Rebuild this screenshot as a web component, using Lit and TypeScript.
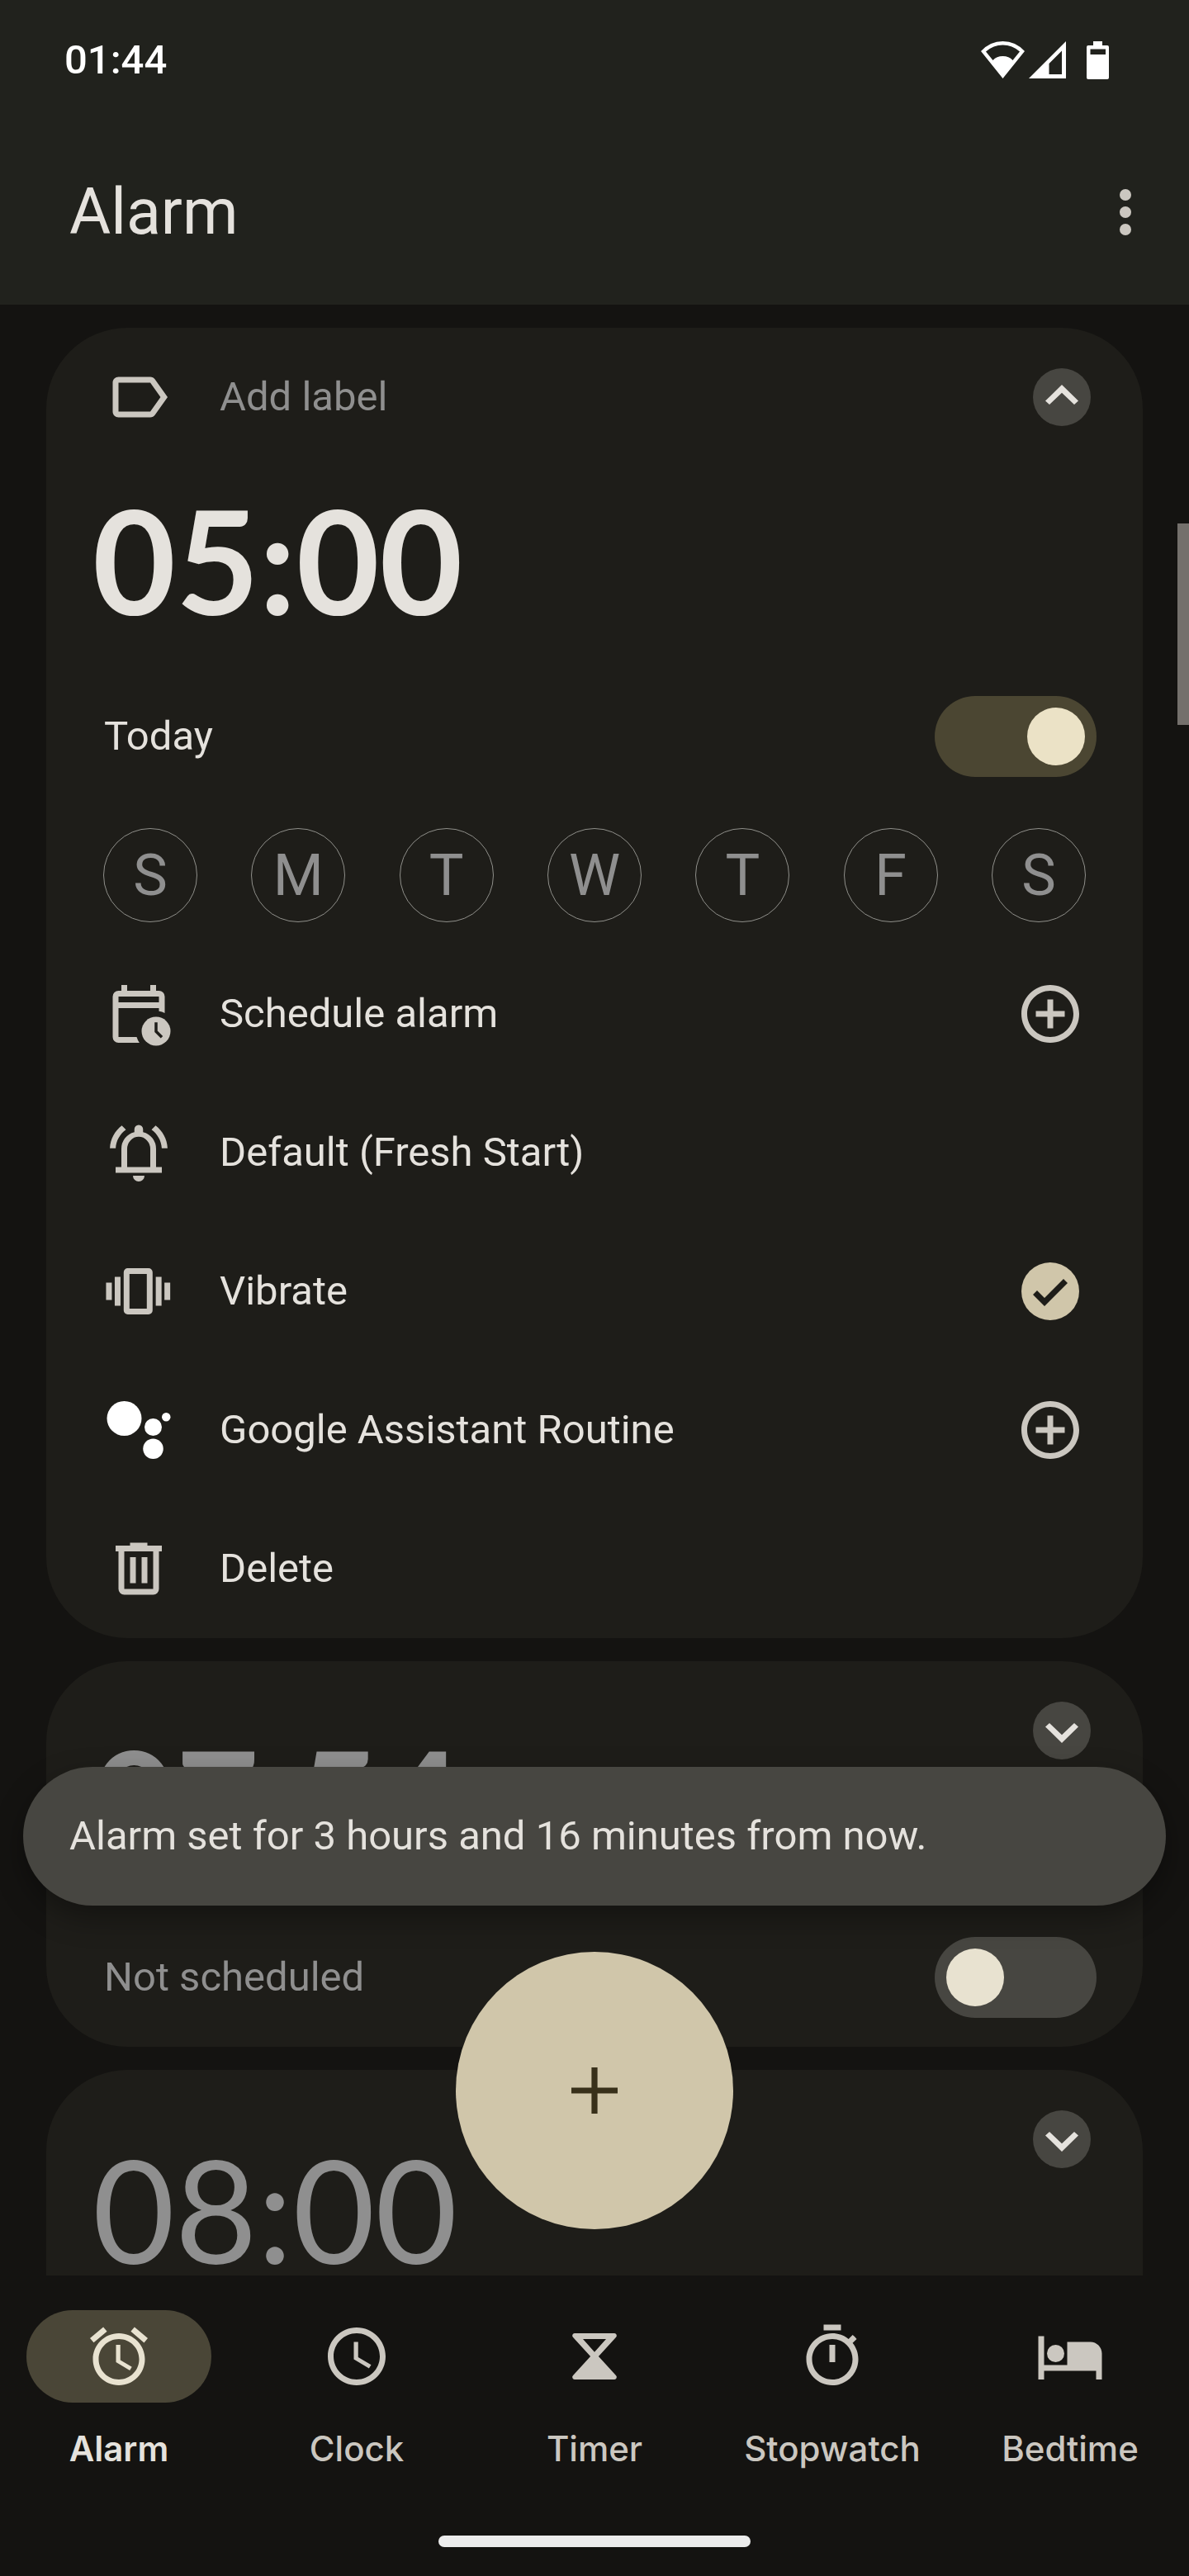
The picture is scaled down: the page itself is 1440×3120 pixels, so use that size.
import { LitElement, html, css, svg, nothing } from "lit";
import { customElement, property } from "lit/decorators.js";
import { classMap } from "lit/directives/class-map.js";

const glyphs = {
  label: svg`<path d="M17.63 5.84C17.27 5.33 16.67 5 16 5L5 5.01C3.9 5.01 3 5.9 3 7v10c0 1.1.9 1.99 2 1.99L16 19c.67 0 1.27-.33 1.63-.84L22 12l-4.37-6.16zM16 17H5V7h11l3.55 5L16 17z"/>`,
  more: svg`<circle cx="12" cy="6" r="2"/><circle cx="12" cy="12" r="2"/><circle cx="12" cy="18" r="2"/>`,
  calendar: svg`<path fill-rule="evenodd" d="M21 11.68V6a2 2 0 0 0-2-2H5a2 2 0 0 0-2 2v14a2 2 0 0 0 2 2h7.26a7 7 0 0 1-.97-2H5V10h14v1.07a7 7 0 0 1 2 .61zM5 6h14v2H5z"/><path d="M6 2h2v2.5H6zM16 2h2v2.5h-2z"/><circle cx="18" cy="18" r="5"/><path d="M18 14.9V18.1L20 20.1" fill="none" stroke="#1e1d19" stroke-width="1"/>`,
  bell: svg`<path d="M7.58 4.08L6.15 2.65C3.75 4.48 2.17 7.3 2.03 10.5h2c.15-2.65 1.51-4.97 3.55-6.42zm12.39 6.42h2c-.15-3.2-1.73-6.02-4.12-7.85l-1.42 1.43c2.02 1.45 3.39 3.77 3.54 6.42z"/><path fill-rule="evenodd" d="M4 19v-2h2v-6.3q0-2.075 1.25-3.688Q8.5 5.4 10.5 4.9V3.9q0-.625.438-1.063Q11.375 2.4 12 2.4t1.063.437Q13.5 3.275 13.5 3.9v1q2 .5 3.25 2.112Q18 8.625 18 10.7V17h2v2ZM8 17h8v-6.3q0-1.65-1.175-2.925Q13.65 6.5 12 6.5q-1.65 0-2.825 1.275Q8 9.05 8 10.7ZM12 22q-.825 0-1.412-.587Q10 20.825 10 20h4q0 .825-.587 1.413Q12.825 22 12 22Z"/>`,
  vibrate: svg`<path d="M.7 9h2v6h-2zM3.7 7h2v10h-2zM17.9 7h2v10h-2zM20.9 9h2v6h-2z"/><rect x="7.8" y="5" width="8" height="14" rx=".4" fill="none" stroke="currentColor" stroke-width="2" stroke-linejoin="round"/>`,
  assistant: svg`<g fill="#fff"><circle cx="7" cy="8" r="6"/><circle cx="17" cy="11" r="3"/><circle cx="21.5" cy="7.5" r="1.5"/><circle cx="17" cy="18.5" r="3.5"/></g>`,
  trash: svg`<path fill-rule="evenodd" d="M9 3h6v1h5v2h-1v13a2 2 0 0 1-2 2H7a2 2 0 0 1-2-2V6H4V4h5zM7 6v13h10V6zM9 8h2v9H9zM13 8h2v9h-2z"/>`,
  addCircle: svg`<path d="M13 7h-2v4H7v2h4v4h2v-4h4v-2h-4V7zm-1-5C6.48 2 2 6.48 2 12s4.48 10 10 10 10-4.48 10-10S17.52 2 12 2zm0 18c-4.41 0-8-3.59-8-8s3.59-8 8-8 8 3.59 8 8-3.59 8-8 8z"/>`,
  plus: svg`<path d="M11.1 5h1.8v6.1H19v1.8h-6.1V19h-1.8v-6.1H5v-1.8h6.1z"/>`,
  alarm: svg`<path d="M22 5.72l-4.6-3.86-1.29 1.53 4.6 3.86L22 5.72zM7.88 3.39L6.6 1.86 2 5.71l1.29 1.53 4.59-3.85zM12.5 8H11v6l4.75 2.85.75-1.23-4-2.37V8zM12 4c-4.97 0-9 4.03-9 9s4.02 9 9 9c4.97 0 9-4.03 9-9s-4.03-9-9-9zm0 16c-3.87 0-7-3.13-7-7s3.13-7 7-7 7 3.13 7 7-3.13 7-7 7z"/>`,
  clock: svg`<path d="M11.99 2C6.47 2 2 6.48 2 12s4.47 10 9.99 10C17.52 22 22 17.52 22 12S17.52 2 11.99 2zM12 20c-4.42 0-8-3.58-8-8s3.58-8 8-8 8 3.58 8 8-3.58 8-8 8zM12.5 7H11v6l5.25 3.15.75-1.23-4.5-2.67z"/>`,
  timer: svg`<path fill-rule="evenodd" d="M5.2 4h13.6a.8.8 0 0 1 .6 1.4L13.4 12l6 6.6a.8.8 0 0 1-.6 1.4H5.2a.8.8 0 0 1-.6-1.4L10.6 12l-6-6.6A.8.8 0 0 1 5.2 4zM8 6l4 4.5L16 6z"/>`,
  stopwatch: svg`<path d="M15 1H9v2h6V1zm-4 13h2V8h-2v6zm8.03-6.61l1.42-1.42c-.43-.51-.9-.99-1.41-1.41l-1.42 1.42C16.07 4.74 14.12 4 12 4c-4.97 0-9 4.03-9 9s4.02 9 9 9 9-4.03 9-9c0-2.12-.74-4.07-1.97-5.61zM12 20c-3.87 0-7-3.13-7-7s3.13-7 7-7 7 3.13 7 7-3.13 7-7 7z"/>`,
  bed: svg`<circle cx="7" cy="11" r="3"/><path d="M19 7h-8v8H3V5H1v15h2v-3h18v3h2v-9c0-2.21-1.79-4-4-4z"/>`,
};
type Glyph = keyof typeof glyphs;

const icon = (name: Glyph) =>
  html`<svg class="icon" viewBox="0 0 24 24" fill="currentColor" aria-hidden="true">${glyphs[name]}</svg>`;

const shared = css`
  * {
    box-sizing: border-box;
  }
  button,
  input {
    margin: 0;
    padding: 0;
    border: 0;
    background: none;
    color: inherit;
    font: inherit;
    cursor: pointer;
  }
  .icon {
    display: block;
    flex: none;
    width: 84px;
    height: 84px;
  }
`;

const week: [string, string][] = [
  ["S", "Sunday"],
  ["M", "Monday"],
  ["T", "Tuesday"],
  ["W", "Wednesday"],
  ["T", "Thursday"],
  ["F", "Friday"],
  ["S", "Saturday"],
];

@customElement("alarm-card")
class AlarmCard extends LitElement {
  @property() time = "";
  @property() status = "";
  @property({ type: Boolean }) strong = false;
  @property({ type: Boolean }) active = false;
  @property({ type: Boolean }) expanded = false;

  static styles = [
    shared,
    css`
      :host {
        display: block;
        flex: none;
        border-radius: 98px;
        background: #1e1d19;
        color: #8f8f8f;
      }
      :host([active]) {
        color: #e5e2dd;
      }
      .row {
        display: flex;
        align-items: center;
        gap: 56px;
        width: 100%;
        height: 168px;
        padding: 0 70px;
        text-align: left;
      }
      .row .icon {
        color: #cbc7c0;
      }
      .label-row {
        padding-right: 63px;
      }
      .text {
        flex: 1;
      }
      .label-button {
        display: flex;
        flex: 1;
        align-items: center;
        gap: 56px;
        color: #8f8f8f;
      }
      .expander {
        flex: none;
        width: 70px;
        height: 70px;
        border-radius: 50%;
        background: #474641;
        color: #e5e2dd;
      }
      .expander svg {
        display: block;
        width: 100%;
      }
      .summary {
        display: flex;
        align-items: flex-start;
        justify-content: space-between;
        padding: 49px 63px 0 56px;
      }
      .summary .time {
        padding-top: 7px;
      }
      .main-time {
        padding: 0 56px;
      }
      .time {
        font: 400 172px/226px Lato, sans-serif;
      }
      .strong {
        font-size: 174px;
        font-weight: 700;
      }
      .toggle {
        display: flex;
        align-items: center;
        justify-content: space-between;
        padding: 52px 56px 35px 70px;
      }
      .switch {
        appearance: none;
        display: flex;
        flex: none;
        align-items: center;
        width: 196px;
        height: 98px;
        padding: 0 14px;
        border-radius: 49px;
        background: #474641;
      }
      .switch::before {
        content: "";
        width: 70px;
        height: 70px;
        border-radius: 50%;
        background: #e8e2d0;
      }
      .switch:checked {
        justify-content: flex-end;
        background: #4b4632;
      }
      .switch:checked::before {
        background: #ebe2c6;
      }
      .days {
        display: flex;
        justify-content: space-between;
        padding: 27px 69px;
      }
      .day {
        width: 114px;
        height: 114px;
        border: 1px solid #8f8f8a;
        border-radius: 50%;
        color: #8f8f8f;
        font-size: 70px;
        line-height: 112px;
      }
      .check {
        appearance: none;
        flex: none;
        width: 70px;
        height: 70px;
        margin: 0 7px;
        border: 7px solid #cbc7c0;
        border-radius: 50%;
      }
      .check:checked {
        border: 0;
        background: #d0c6aa;
      }
      .check:checked::before {
        content: "";
        display: block;
        width: 70px;
        height: 70px;
        background: #1e1d19;
        clip-path: polygon(28px 53px, 14px 39px, 19px 34px, 28px 43px, 51px 20px, 56px 25px);
      }
    `,
  ];

  private expander() {
    const points = this.expanded
      ? "35,20 55,39.6 50,44 35,29.7 20,44 15,39.6"
      : "35,50 55,30.4 50,26 35,40.3 20,26 15,30.4";
    return html`<button
      class="expander"
      aria-label=${this.expanded ? "Collapse alarm" : "Expand alarm"}
      aria-expanded=${this.expanded ? "true" : "false"}
    >
      <svg viewBox="0 0 70 70" fill="currentColor" aria-hidden="true"><polygon points=${points} /></svg>
    </button>`;
  }

  private clock() {
    return html`<button class=${classMap({ time: true, strong: this.strong })}>${this.time}</button>`;
  }

  private action(name: Glyph, text: string, trailing = false) {
    return html`<button class="row">
      ${icon(name)}<span class="text">${text}</span>${trailing ? icon("addCircle") : nothing}
    </button>`;
  }

  private details() {
    return html`
      <div class="days">
        ${week.map(([letter, name]) => html`<button class="day" aria-label=${name} aria-pressed="false">${letter}</button>`)}
      </div>
      ${this.action("calendar", "Schedule alarm", true)} ${this.action("bell", "Default (Fresh Start)")}
      <label class="row">
        ${icon("vibrate")}<span class="text">Vibrate</span><input class="check" type="checkbox" checked />
      </label>
      ${this.action("assistant", "Google Assistant Routine", true)} ${this.action("trash", "Delete")}
    `;
  }

  render() {
    return html`
      ${this.expanded
        ? html`<div class="row label-row">
              <button class="label-button">${icon("label")}<span>Add label</span></button>
              ${this.expander()}
            </div>
            <div class="main-time">${this.clock()}</div>`
        : html`<div class="summary">${this.clock()}${this.expander()}</div>`}
      <div class="toggle">
        <label for="enabled">${this.status}</label>
        <input
          id="enabled"
          class="switch"
          type="checkbox"
          role="switch"
          aria-label=${this.time}
          ?checked=${this.active}
        />
      </div>
      ${this.expanded ? this.details() : nothing}
    `;
  }
}

const tabs: [Glyph, string][] = [
  ["alarm", "Alarm"],
  ["clock", "Clock"],
  ["timer", "Timer"],
  ["stopwatch", "Stopwatch"],
  ["bed", "Bedtime"],
];

@customElement("app-root")
class AppRoot extends LitElement {
  static styles = [
    shared,
    css`
      :host {
        display: flex;
        flex-direction: column;
        height: 100vh;
        background: #141311;
        color: #e5e2dd;
        font: 400 49px/56px Roboto, sans-serif;
      }
      .header {
        flex: none;
        background: #21221d;
      }
      .status-bar {
        display: flex;
        align-items: center;
        justify-content: space-between;
        height: 145px;
        padding: 0 97px 0 78px;
        color: #fff;
        font-weight: 500;
      }
      .signals {
        display: flex;
        align-items: center;
        gap: 5px;
      }
      .signals svg {
        display: block;
        height: 46px;
      }
      .battery {
        margin-left: 20px;
      }
      .app-bar {
        display: flex;
        align-items: center;
        justify-content: space-between;
        height: 224px;
        padding: 0 35px 0 84px;
      }
      .title {
        margin: 0;
        font-size: 77px;
        font-weight: 400;
        line-height: 84px;
      }
      .more {
        color: #cbc7c0;
      }
      .stage {
        position: relative;
        flex: 1;
        min-height: 0;
      }
      .alarms {
        display: flex;
        flex-direction: column;
        gap: 28px;
        height: 100%;
        padding: 28px 56px 0;
        overflow-y: auto;
        scrollbar-width: none;
      }
      .scroll-thumb {
        position: absolute;
        top: 265px;
        right: 0;
        width: 14px;
        height: 244px;
        background: #74706c;
      }
      .floating {
        position: absolute;
        right: 28px;
        bottom: 56px;
        left: 28px;
        display: flex;
        flex-direction: column;
        align-items: center;
        gap: 56px;
      }
      .snackbar {
        width: 100%;
        padding: 56px;
        border-radius: 84px;
        background: #474641;
        box-shadow: 0 14px 35px rgb(0 0 0 / 35%);
      }
      .fab {
        display: flex;
        align-items: center;
        justify-content: center;
        width: 336px;
        height: 336px;
        border-radius: 50%;
        background: #d0c6aa;
        color: #38301a;
      }
      .fab .icon {
        width: 96px;
        height: 96px;
      }
      .nav {
        display: flex;
        flex: none;
        padding-top: 42px;
        color: #cbc7c0;
        font: 500 42px/56px Inter, sans-serif;
      }
      .tab {
        display: flex;
        flex: 1 0 0;
        flex-direction: column;
        align-items: center;
        gap: 28px;
        color: inherit;
        text-decoration: none;
      }
      .pill {
        display: flex;
        align-items: center;
        justify-content: center;
        width: 224px;
        height: 112px;
        border-radius: 56px;
      }
      .selected {
        color: #e5e2dd;
        font-weight: 600;
      }
      .selected .pill {
        background: #4a4637;
        color: #e8e2d0;
      }
      .gesture {
        display: flex;
        flex: none;
        justify-content: center;
        padding: 77px 0 35px;
      }
      .handle {
        width: 378px;
        height: 14px;
        border-radius: 7px;
        background: #ececec;
      }
    `,
  ];

  render() {
    return html`
      <header class="header">
        <div class="status-bar">
          <span>01:44</span>
          <div class="signals" role="img" aria-label="Wi-Fi, mobile signal, battery">
            <svg width="53" height="46" viewBox="0 0 53 46" fill="#fff">
              <path fill-rule="evenodd" d="M0 12Q11 0 26.5 0T53 12L26.5 45zM6 12.5 14.5 23Q19 18 26.5 18T38.5 23L47 12.5Q38 4.500 26.5 4.500T6 12.5z" />
            </svg>
            <svg width="45" height="46" viewBox="0 0 45 46" fill="#fff">
              <path fill-rule="evenodd" d="M45 0V45H0zM40 11.5 24.5 27V40H40z" />
            </svg>
            <svg class="battery" width="27" height="46" viewBox="0 0 27 46" fill="#fff">
              <path fill-rule="evenodd" d="M8 0H19V5H25a2 2 0 0 1 2 2V44a2 2 0 0 1-2 2H2a2 2 0 0 1-2-2V7A2 2 0 0 1 2 5H8zM4.5 9.5V16H23V9.5z" />
            </svg>
          </div>
        </div>
        <div class="app-bar">
          <h1 class="title">Alarm</h1>
          <button class="more" aria-label="More options">${icon("more")}</button>
        </div>
      </header>
      <main class="stage">
        <div class="alarms">
          <alarm-card time="05:00" status="Today" strong active expanded></alarm-card>
          <alarm-card time="07:54" status="Not scheduled" strong></alarm-card>
          <alarm-card time="08:00"></alarm-card>
        </div>
        <div class="scroll-thumb"></div>
        <div class="floating">
          <div class="snackbar" role="status">Alarm set for 3 hours and 16 minutes from now.</div>
          <button class="fab" aria-label="Add alarm">${icon("plus")}</button>
        </div>
      </main>
      <nav class="nav">
        ${tabs.map(
          ([name, text], i) => html`<a class=${classMap({ tab: true, selected: i === 0 })} href="#${text.toLowerCase()}">
            <span class="pill">${icon(name)}</span><span>${text}</span>
          </a>`,
        )}
      </nav>
      <div class="gesture"><div class="handle"></div></div>
    `;
  }
}
